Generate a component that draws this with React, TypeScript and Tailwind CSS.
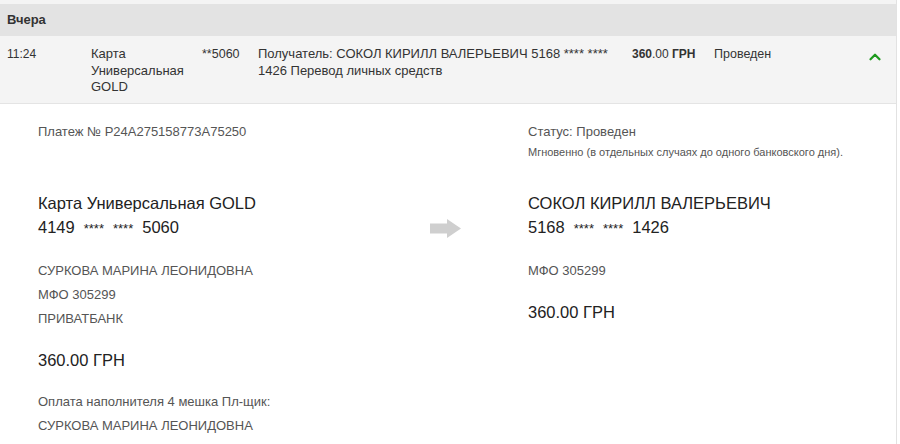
import { ChevronUp } from "lucide-react"

const font = { fontFamily: '"Liberation Sans", Arial, sans-serif' }

function CardNumber({ first, last }: { first: string; last: string }) {
  return (
    <div className="flex items-baseline gap-[9px] text-[16.5px] leading-[24px] text-[#222]">
      <span>{first}</span>
      <span className="text-[13px]">****</span>
      <span className="text-[13px]">****</span>
      <span>{last}</span>
    </div>
  )
}

function Arrow() {
  return (
    <svg width="31" height="19" viewBox="0 0 31 19">
      <rect x="0" y="4.5" width="18" height="10" fill="#cfcfcf" />
      <polygon points="17,0 31,9.5 17,19" fill="#cfcfcf" />
    </svg>
  )
}

export default function App() {
  return (
    <div className="min-h-[444px] w-[900px] bg-white text-[#333]" style={font}>
      <div className="w-[897px] border-r border-[#e2e2e2]">
        <div className="h-[4px] bg-[#f4f4f4]" />
        <div className="flex h-[32px] items-center bg-[#e3e3e3] px-[7px] text-[13px] font-bold text-[#333]">
          Вчера
        </div>

        <div className="flex border-b border-[#e4e4e4] bg-[#f4f4f4] pb-[7px] pt-[10px] text-[13px] leading-[16.5px] text-[#333]">
          <div className="w-[91px] pl-[7px] text-[12px]">11:24</div>
          <div className="w-[111px] pr-[8px]">Карта Универсальная GOLD</div>
          <div className="w-[56px] text-[12.5px]">**5060</div>
          <div className="w-[374px] pr-[14px]">
            Получатель: СОКОЛ КИРИЛЛ ВАЛЕРЬЕВИЧ 5168 **** **** 1426 Перевод личных средств
          </div>
          <div className="w-[82px] text-[12px]">
            <span className="font-bold">360</span>.00 <span className="font-bold">ГРН</span>
          </div>
          <div className="flex-1 text-[12.5px]">Проведен</div>
          <div className="pr-[12px] pt-[2px]">
            <ChevronUp size={18} strokeWidth={3} className="text-[#1d9a1d]" />
          </div>
        </div>

        <div className="flex pb-[8px] pl-[38px] pt-[18px]">
          <div className="w-[390px]">
            <div className="h-[69px] text-[13px] leading-[20px] text-[#555]">
              Платеж № P24A275158773A75250
            </div>
            <div className="text-[16.5px] leading-[24px] text-[#222]">Карта Универсальная GOLD</div>
            <CardNumber first="4149" last="5060" />
            <div className="mt-[18px] text-[13px] leading-[24px] text-[#555]">
              <div>СУРКОВА МАРИНА ЛЕОНИДОВНА</div>
              <div>МФО 305299</div>
              <div>ПРИВАТБАНК</div>
            </div>
            <div className="mt-[17px] text-[16.5px] leading-[24px] text-[#222]">360.00 ГРН</div>
            <div className="mt-[18px] text-[13px] leading-[24px] text-[#555]">
              <div>Оплата наполнителя 4 мешка Пл-щик:</div>
              <div>СУРКОВА МАРИНА ЛЕОНИДОВНА</div>
            </div>
          </div>

          <div className="w-[100px] pl-[2px] pt-[97px]">
            <Arrow />
          </div>

          <div className="flex-1">
            <div className="h-[69px] text-[#555]">
              <div className="text-[13px] leading-[20px]">Статус: Проведен</div>
              <div className="text-[11px] leading-[20px]">
                Мгновенно (в отдельных случаях до одного банковского дня).
              </div>
            </div>
            <div className="text-[16.5px] leading-[24px] text-[#222]">СОКОЛ КИРИЛЛ ВАЛЕРЬЕВИЧ</div>
            <CardNumber first="5168" last="1426" />
            <div className="mt-[18px] text-[13px] leading-[24px] text-[#555]">МФО 305299</div>
            <div className="mt-[17px] text-[16.5px] leading-[24px] text-[#222]">360.00 ГРН</div>
          </div>
        </div>
      </div>
    </div>
  )
}
